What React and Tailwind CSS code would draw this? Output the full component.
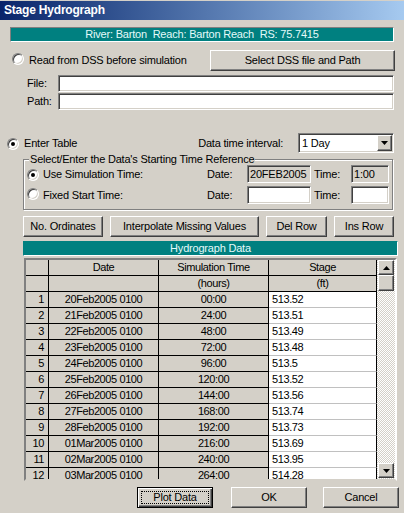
import React from "react";

const btn =
  "flex items-center justify-center bg-[#d4d0c8] border border-t-white border-l-white border-r-[#404040] border-b-[#404040] shadow-[inset_-1px_-1px_0_#808080]";
const sunk =
  "border border-t-[#808080] border-l-[#808080] border-r-white border-b-white shadow-[inset_1px_1px_0_#404040,inset_-1px_-1px_0_#d4d0c8]";

function Radio({ checked }) {
  return (
    <span className="inline-flex w-[12px] h-[12px] shrink-0 rounded-full bg-white border border-t-[#808080] border-l-[#808080] border-r-white border-b-white shadow-[inset_1px_1px_0_#404040,inset_-1px_-1px_0_#d4d0c8] items-center justify-center">
      {checked && <span className="w-[4px] h-[4px] rounded-full bg-black" />}
    </span>
  );
}

function Arrow({ up }) {
  return (
    <svg width="7" height="4" viewBox="0 0 7 4">
      {up ? <path d="M3.5 0L7 4H0z" fill="black" /> : <path d="M0 0h7L3.5 4z" fill="black" />}
    </svg>
  );
}

const rows = [
  ["1", "20Feb2005 0100", "00:00", "513.52"],
  ["2", "21Feb2005 0100", "24:00", "513.51"],
  ["3", "22Feb2005 0100", "48:00", "513.49"],
  ["4", "23Feb2005 0100", "72:00", "513.48"],
  ["5", "24Feb2005 0100", "96:00", "513.5"],
  ["6", "25Feb2005 0100", "120:00", "513.52"],
  ["7", "26Feb2005 0100", "144:00", "513.56"],
  ["8", "27Feb2005 0100", "168:00", "513.74"],
  ["9", "28Feb2005 0100", "192:00", "513.73"],
  ["10", "01Mar2005 0100", "216:00", "513.69"],
  ["11", "02Mar2005 0100", "240:00", "513.95"],
  ["12", "03Mar2005 0100", "264:00", "514.28"],
];

const gcell = "h-[16px] shrink-0 flex items-center bg-[#d4d0c8] border-r border-b border-black";

export default function App() {
  return (
    <div className="w-[404px] h-[513px] bg-[#d4d0c8] overflow-hidden flex flex-col font-['Liberation_Sans',Arial,sans-serif] text-[11px] leading-[13px] text-black tracking-[-0.2px]">
      {/* Title bar */}
      <div className="mt-[1px] h-[19px] shrink-0 bg-linear-to-r from-[#0a246a] to-[#a6caf0] flex items-center pl-[4px] text-white font-bold text-[12px]">
        Stage Hydrograph
      </div>

      {/* Banner */}
      <div className="ml-[10px] mt-[7px] w-[384px] h-[15px] shrink-0 bg-[#008080] text-[#e4fafa] flex items-center justify-center border border-t-[#808080] border-l-[#808080] border-r-white border-b-white">
        River: Barton&nbsp; Reach: Barton Reach&nbsp; RS: 75.7415
      </div>

      {/* DSS row */}
      <div className="mt-[8px] h-[21px] shrink-0 flex items-center">
        <span className="ml-[12px]"><Radio /></span>
        <span className="ml-[5px]">Read from DSS before simulation</span>
        <div className={`${btn} ml-auto mr-[9px] w-[185px] h-[21px]`}>Select DSS file and Path</div>
      </div>

      <div className="mt-[4px] h-[17px] shrink-0 flex items-center">
        <span className="ml-[27px] w-[31px]">File:</span>
        <div className={`${sunk} w-[336px] h-[17px] bg-white`} />
      </div>
      <div className="mt-[1px] h-[17px] shrink-0 flex items-center">
        <span className="ml-[27px] w-[31px]">Path:</span>
        <div className={`${sunk} w-[336px] h-[17px] bg-white`} />
      </div>

      {/* Enter table row */}
      <div className="mt-[23px] h-[20px] shrink-0 flex items-center">
        <span className="ml-[7px]"><Radio checked /></span>
        <span className="ml-[5px]">Enter Table</span>
        <span className="ml-auto">Data time interval:</span>
        <div className={`${sunk} ml-[15px] mr-[10px] w-[96px] h-[20px] bg-white flex items-center`}>
          <span className="ml-[3px] flex-1">1 Day</span>
          <div className={`${btn} w-[15px] h-[16px] mr-[1px]`}>
            <Arrow />
          </div>
        </div>
      </div>

      {/* Group box */}
      <fieldset className="ml-[23px] w-[370px] shrink-0 border border-[#808080] shadow-[inset_1px_1px_0_#fff,1px_1px_0_#fff] pb-[5px]">
        <legend className="ml-[5px] px-[1px] bg-[#d4d0c8] leading-[13px]">
          Select/Enter the Data's Starting Time Reference
        </legend>
        <div className="-mt-[1px] h-[18px] flex items-center">
          <span className="ml-[3px]"><Radio checked /></span>
          <span className="ml-[4px] w-[164px]">Use Simulation Time:</span>
          <span className="w-[40px]">Date:</span>
          <div className={`${sunk} w-[64px] h-[18px] bg-[#d4d0c8] flex items-center pl-[2px]`}>20FEB2005</div>
          <span className="ml-[3px] w-[37px]">Time:</span>
          <div className={`${sunk} w-[38px] h-[18px] bg-[#d4d0c8] flex items-center pl-[2px]`}>1:00</div>
        </div>
        <div className="mt-[3px] h-[18px] flex items-center">
          <span className="ml-[3px]"><Radio /></span>
          <span className="ml-[4px] w-[164px]">Fixed Start Time:</span>
          <span className="w-[40px]">Date:</span>
          <div className={`${sunk} w-[64px] h-[18px] bg-white`} />
          <span className="ml-[3px] w-[37px]">Time:</span>
          <div className={`${sunk} w-[38px] h-[18px] bg-white`} />
        </div>
      </fieldset>

      {/* Buttons row */}
      <div className="mt-[6px] h-[21px] shrink-0 flex">
        <div className={`${btn} ml-[23px] w-[80px] h-[21px]`}>No. Ordinates</div>
        <div className={`${btn} ml-[7px] w-[149px] h-[21px]`}>Interpolate Missing Values</div>
        <div className={`${btn} ml-[7px] w-[61px] h-[21px]`}>Del Row</div>
        <div className={`${btn} ml-[7px] w-[60px] h-[21px]`}>Ins Row</div>
      </div>

      {/* Table caption */}
      <div className="mt-[4px] ml-[23px] w-[375px] h-[15px] shrink-0 bg-[#008080] text-[#e4fafa] flex items-center justify-center border border-t-[#008080] border-l-[#008080] border-r-white border-b-white">
        Hydrograph Data
      </div>

      {/* Table */}
      <div className="mt-[2px] ml-[24px] w-[373px] h-[223px] shrink-0 flex border-2 border-t-[#808080] border-l-[#808080] border-r-white border-b-[#d4d0c8] shadow-[inset_1px_1px_0_#404040]">
        <div className="w-[351px] h-full overflow-hidden flex flex-col tracking-[-0.4px]">
          <div className="flex shrink-0">
            <div className={`${gcell} w-[23px]`} />
            <div className={`${gcell} w-[110px] justify-center`}>Date</div>
            <div className={`${gcell} w-[110px] justify-center`}>Simulation Time</div>
            <div className={`${gcell} w-[108px] justify-center`}>Stage</div>
          </div>
          <div className="flex shrink-0">
            <div className={`${gcell} w-[23px]`} />
            <div className={`${gcell} w-[110px] justify-center`} />
            <div className={`${gcell} w-[110px] justify-center`}>(hours)</div>
            <div className={`${gcell} w-[108px] justify-center`}>(ft)</div>
          </div>
          {rows.map((r) => (
            <div key={r[0]} className="flex shrink-0">
              <div className={`${gcell} w-[23px] justify-end pr-[4px]`}>{r[0]}</div>
              <div className={`${gcell} w-[110px] justify-center`}>{r[1]}</div>
              <div className={`${gcell} w-[110px] justify-center`}>{r[2]}</div>
              <div className="h-[16px] shrink-0 w-[108px] flex items-center pl-[3px] bg-white border-r border-black border-b border-b-[#c0c0c0]">
                {r[3]}
              </div>
            </div>
          ))}
        </div>
        <div className="w-[18px] h-full flex flex-col items-center bg-[repeating-conic-gradient(#ffffff_0_25%,#d4d0c8_0_50%)] bg-[length:2px_2px]">
          <div className={`${btn} w-[16px] h-[15px] shrink-0`}>
            <Arrow up />
          </div>
          <div className={`${btn} w-[16px] h-[16px] shrink-0`} />
          <div className="flex-1" />
          <div className={`${btn} w-[16px] h-[15px] shrink-0 mb-[1px]`}>
            <Arrow />
          </div>
        </div>
      </div>

      {/* Bottom buttons */}
      <div className="mt-[6px] h-[21px] shrink-0 flex">
        <div className="ml-[137px] w-[76px] h-[21px] flex p-[3px] bg-[#d4d0c8] border border-black shadow-[inset_1px_1px_0_#fff,inset_-1px_-1px_0_#404040,inset_-2px_-2px_0_#808080]">
          <span className="flex-1 flex items-center justify-center border border-dotted border-black">Plot Data</span>
        </div>
        <div className={`${btn} ml-[18px] w-[76px] h-[21px]`}>OK</div>
        <div className={`${btn} ml-[16px] w-[76px] h-[21px]`}>Cancel</div>
      </div>
    </div>
  );
}
